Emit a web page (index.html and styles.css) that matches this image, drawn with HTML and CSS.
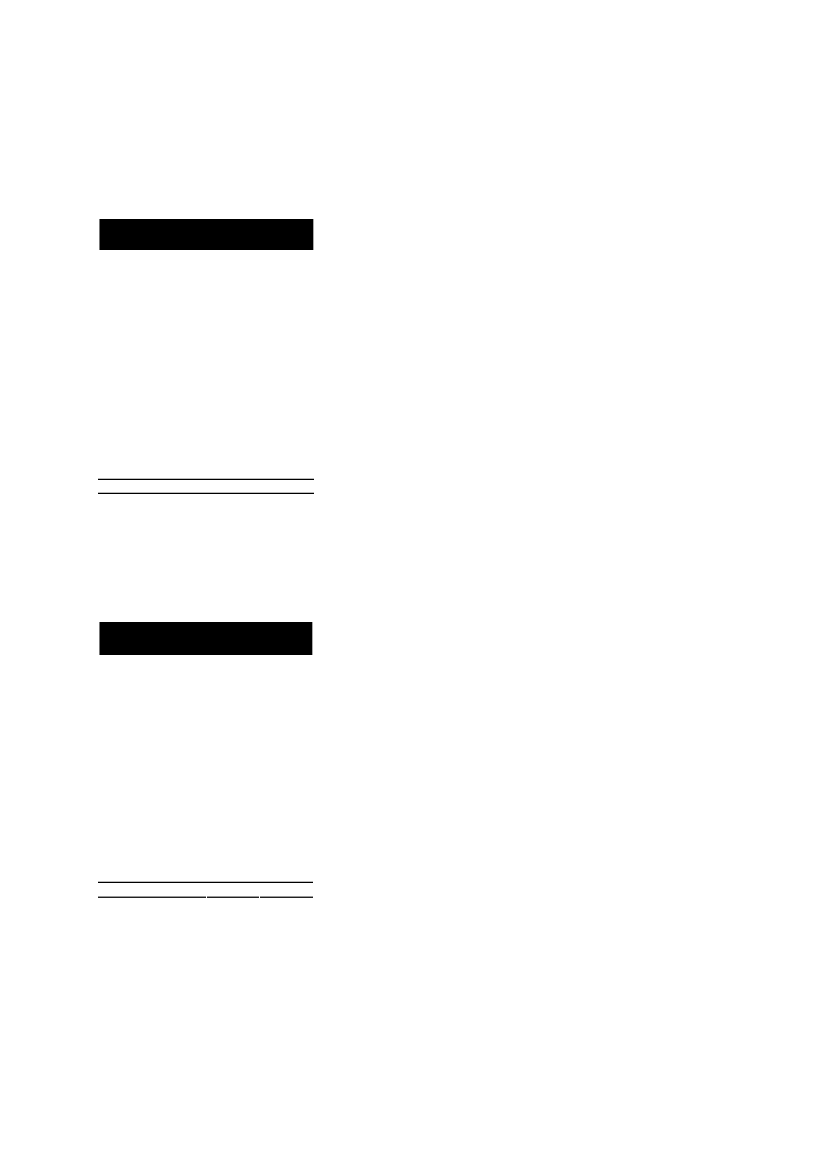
FILE: index.html
```html
<!DOCTYPE html>
<html lang="en">
<head>
<meta charset="utf-8">
<title>Tables</title>
<link rel="stylesheet" href="styles.css">
</head>
<body>
<main class="page">
  <section class="block block-first">
    <div class="head"></div>
    <div class="body body-first"></div>
    <div class="rule"></div>
    <div class="rule-gap"></div>
    <div class="rule"></div>
  </section>
  <section class="block block-second">
    <div class="head head-second"></div>
    <div class="body body-second"></div>
    <div class="rule"></div>
    <div class="rule-gap rule-gap-second"></div>
    <div class="cols">
      <div class="col col-a"></div>
      <div class="col col-b"></div>
      <div class="col col-c"></div>
    </div>
  </section>
</main>
</body>
</html>
```
FILE: styles.css
```css
html, body {
  margin: 0;
  padding: 0;
  background: #fff;
  font-family: "Liberation Sans", Arial, sans-serif;
}
.page {
  width: 827px;
  height: 1169px;
  padding-left: 98px;
  box-sizing: border-box;
}
.block {
  width: 216px;
  display: flex;
  flex-direction: column;
}
.block-first { padding-top: 219px; }
.block-second { padding-top: 128px; width: 215px; }
.head {
  margin-left: 1px;
  height: 31px;
  background: #000;
  border-left: 1px solid #777;
  border-right: 1px solid #aaa;
  box-sizing: border-box;
}
.head-second { height: 33px; }
.body-first { height: 229px; }
.body-second { height: 227px; }
.rule {
  height: 1px;
  background: #000;
  box-shadow: 0 -1px 0 #bbb;
}
.rule-gap { height: 13px; }
.rule-gap-second { height: 14px; }
.cols {
  display: flex;
  gap: 1px;
}
.col {
  height: 1px;
  background: #222;
  box-shadow: 0 -1px 0 #999;
}
.col-a { width: 108px; }
.col-b { width: 52px; }
.col-c { flex: 1; }
```
